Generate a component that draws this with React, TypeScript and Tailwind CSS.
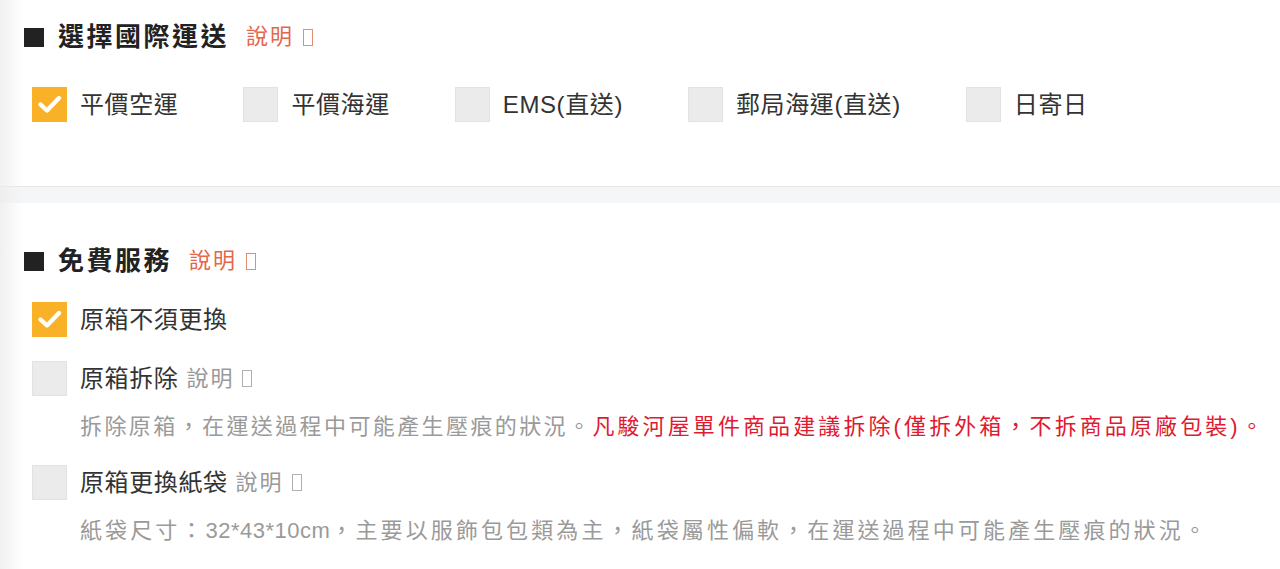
import React from "react";

const FONT = { fontFamily: '"Liberation Sans", "Noto Sans CJK TC", sans-serif' };

function Tofu({ className }: { className: string }) {
  return (
    <span
      className={`inline-block w-[10px] h-[17px] border align-[-2px] ${className}`}
    />
  );
}

function Box({ checked }: { checked?: boolean }) {
  if (checked) {
    return (
      <span className="flex items-center justify-center w-[35px] h-[35px] shrink-0 bg-[#f9b227]">
        <svg width="35" height="35" viewBox="0 0 35 35">
          <path
            d="M8.5 17.5 L15 23.5 L27 11"
            fill="none"
            stroke="#ffffff"
            strokeWidth="4.4"
            strokeLinecap="round"
            strokeLinejoin="round"
          />
        </svg>
      </span>
    );
  }
  return (
    <span className="block w-[35px] h-[35px] shrink-0 bg-[#ebebeb] border border-[#e2e2e2]" />
  );
}

function Heading({ title }: { title: string }) {
  return (
    <div className="flex items-center h-[36px] pl-[24px]">
      <span className="block w-[20px] h-[19px] bg-[#222222]" />
      <span className="ml-[14px] text-[26px] font-bold tracking-[2.5px] text-[#222222] leading-[36px]">
        {title}
      </span>
      <span className="ml-[17px] text-[22px] tracking-[2px] text-[#e5664b] leading-[36px] flex items-center">
        說明
        <Tofu className="border-[#e98a74] ml-[9px]" />
      </span>
    </div>
  );
}

function Option({ label, checked }: { label: string; checked?: boolean }) {
  return (
    <div className="flex items-center gap-[13px]">
      <Box checked={checked} />
      <span className="text-[24px] tracking-[0.6px] text-[#333333] leading-[35px]">{label}</span>
    </div>
  );
}

function Sub({ label }: { label: string }) {
  return (
    <div className="flex items-center gap-[13px]">
      <Box />
      <span className="text-[24px] tracking-[0.6px] text-[#333333] leading-[35px] flex items-center">
        {label}
        <span className="ml-[8px] text-[22px] tracking-[2px] text-[#9a9a9a] flex items-center">
          說明
          <Tofu className="border-[#b0b0b0] ml-[8px]" />
        </span>
      </span>
    </div>
  );
}

export default function App() {
  return (
    <div className="relative w-[1280px] h-[569px] bg-white overflow-hidden" style={FONT}>
      <div className="pt-[19px] pb-[64px]">
        <Heading title="選擇國際運送" />
        <div className="flex items-center gap-[65px] pl-[32px] mt-[32px]">
          <Option label="平價空運" checked />
          <Option label="平價海運" />
          <Option label="EMS(直送)" />
          <Option label="郵局海運(直送)" />
          <Option label="日寄日" />
        </div>
      </div>

      <div className="h-[17px] border-t border-[#e6e6e6] bg-[#f5f6f8]" />

      <div className="pt-[40px]">
        <Heading title="免費服務" />
        <div className="pl-[32px] mt-[23px] flex flex-col">
          <Option label="原箱不須更換" checked />
          <div className="mt-[24px]">
            <Sub label="原箱拆除" />
          </div>
          <p className="ml-[48px] mt-[15px] text-[22px] leading-[32px] tracking-[2.4px] text-[#9a9a9a] whitespace-nowrap">
            拆除原箱，在運送過程中可能產生壓痕的狀況。
            <span className="text-[#e01a31] tracking-[3.1px]">
              凡駿河屋單件商品建議拆除(僅拆外箱，不拆商品原廠包裝)。
            </span>
          </p>
          <div className="mt-[22px]">
            <Sub label="原箱更換紙袋" />
          </div>
          <p className="ml-[48px] mt-[15px] text-[22px] leading-[32px] tracking-[3.1px] text-[#9a9a9a] whitespace-nowrap">
            紙袋尺寸：<span className="tracking-[0.5px]">32*43*10cm</span>，主要以服飾包包類為主，紙袋屬性偏軟，在運送過程中可能產生壓痕的狀況。
          </p>
        </div>
      </div>

      <div className="pointer-events-none absolute inset-y-0 left-0 w-[22px] bg-gradient-to-r from-[#ececec] to-transparent opacity-80" />
    </div>
  );
}
